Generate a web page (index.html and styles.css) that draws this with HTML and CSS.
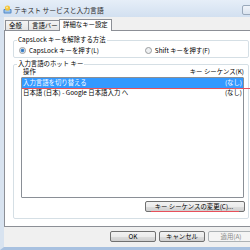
FILE: index.html
```html
<!DOCTYPE html>
<html lang="ja">
<head>
  <meta charset="UTF-8" />
  <title>テキスト サービスと入力言語</title>
  <link rel="stylesheet" href="styles.css">
</head>
<body>
  <div class="window">
    <div class="titlebar">
      <svg class="app-icon" width="9" height="9" viewBox="0 0 9 9">
        <rect x="0.5" y="4" width="8" height="4.5" rx="1" fill="#4f86c6" />
        <rect x="1.5" y="5" width="6" height="2.5" fill="#9cc3ea" />
        <circle cx="4.5" cy="3" r="2.6" fill="#f3c53c" />
        <circle cx="4" cy="2.4" r="1" fill="#fbe8a0" />
      </svg>
      <span class="title">テキスト サービスと入力言語</span>
      <div class="title-btn"></div>
    </div>
    <div class="frame">
      <div class="tabs">
        <div class="tab">全般</div>
        <div class="tab">言語バー</div>
        <div class="tab active">詳細なキー設定</div>
      </div>
      <div class="panel">
        <fieldset class="group caps">
          <legend>CapsLock キーを解除する方法</legend>
          <div class="radio-row">
            <label class="radio-item first"><span class="radio checked"></span>CapsLock キーを押す(L)</label>
            <label class="radio-item second"><span class="radio"></span>Shift キーを押す(F)</label>
          </div>
        </fieldset>
        <fieldset class="group hotkeys">
          <legend>入力言語のホット キー</legend>
          <div class="list-head">
            <span>操作</span>
            <span>キー シーケンス(K)</span>
          </div>
          <div class="listbox">
            <div class="row selected">
              <span>入力言語を切り替える</span><span>(なし)</span>
              <div class="mark-line"></div>
            </div>
            <div class="row">
              <span>日本語 (日本) - Google 日本語入力 へ</span><span>(なし)</span>
            </div>
          </div>
          <div class="change-row">
            <button class="btn change"><span class="mark">キー シーケンスの変更(C)...</span></button>
          </div>
        </fieldset>
      </div>
      <div class="dialog-buttons">
        <button class="btn">OK</button>
        <button class="btn">キャンセル</button>
        <button class="btn disabled">適用(A)</button>
      </div>
    </div>
  </div>
</body>
</html>
```

FILE: styles.css
```css
body {
  margin: 0;
  width: 250px;
  height: 250px;
  overflow: hidden;
  background: #f0f0f0;
  font-family: "Noto Sans CJK JP", sans-serif;
  font-size: 6.4px;
  color: #000;
}
.window {
  display: flex;
  flex-direction: column;
  height: 250px;
}
.titlebar {
  height: 17px;
  flex: none;
  display: flex;
  align-items: center;
  padding: 2px 0 0 3px;
  box-sizing: border-box;
  background: linear-gradient(#e6eef8, #d2e0f0);
}
.app-icon {
  flex: none;
}
.title {
  margin-left: 2px;
  font-size: 6.8px;
  color: #2b2b2b;
}
.title-btn {
  margin-left: auto;
  width: 10px;
  height: 8px;
  margin-right: -4px;
  border: 1px solid #9aa9bb;
  border-radius: 2px;
  background: linear-gradient(#f0f4fa, #dbe4ef);
}
.frame {
  flex: 1;
  display: flex;
  flex-direction: column;
  border-left: 4px solid #d8e3f0;
  border-bottom: 3px solid #a8c1e0;
  overflow: hidden;
}
.tabs {
  display: flex;
  align-items: flex-end;
  height: 13px;
  padding-left: 1px;
  flex: none;
}
.tab {
  height: 9px;
  padding: 0 3px;
  line-height: 9px;
  border: 1px solid #8c8f96;
  border-bottom: none;
  background: linear-gradient(#f4f4f4, #e4e4e4);
  margin-right: -1px;
  white-space: nowrap;
}
.tab:nth-child(1) { width: 16px; }
.tab:nth-child(2) { width: 24px; }
.tab.active {
  height: 11px;
  line-height: 10px;
  width: 45px;
  background: #fff;
  margin-bottom: -1px;
  position: relative;
  z-index: 1;
}
.panel {
  height: 197px;
  box-sizing: border-box;
  border: 1px solid #8c8f96;
  margin-right: -10px;
  background: #fff;
  padding: 5px 0 0 8px;
  flex: none;
}
.group {
  width: 236px;
  box-sizing: border-box;
  margin: 0;
  padding: 0;
  border: 1px solid #d5dfe5;
  border-radius: 2px;
}
.group legend {
  margin-left: 3px;
  padding: 0 1px;
  line-height: 8px;
}
.caps {
  height: 22px;
}
.radio-row {
  display: flex;
  margin-top: 2px;
  height: 8px;
  align-items: center;
}
.radio-item {
  display: flex;
  align-items: center;
  white-space: nowrap;
}
.radio-item.first { margin-left: 5px; }
.radio-item.second { margin-left: 46px; }
.radio {
  width: 5px;
  height: 5px;
  border: 1px solid #9a9c9e;
  border-radius: 50%;
  background: #eef0f2;
  margin-right: 3px;
  flex: none;
}
.radio.checked {
  background: radial-gradient(circle, #2f6fb3 0, #4d92d6 1.6px, #e8edf2 2.2px);
}
.hotkeys {
  margin-top: 2px;
  height: 159px;
}
.list-head {
  display: flex;
  justify-content: space-between;
  height: 8px;
  line-height: 8px;
  margin: 0 4px 0 9px;
}
.listbox {
  position: relative;
  height: 121px;
  box-sizing: border-box;
  margin: 1px 4px 0 7px;
  border: 1px solid #8a8f96;
  border-radius: 1px;
  background: #fff;
  padding-top: 0;
}
.row {
  display: flex;
  justify-content: space-between;
  height: 10px;
  line-height: 10px;
  padding: 0 1px;
  white-space: nowrap;
}
.row.selected {
  position: relative;
  background: #3399ff;
  color: #fff;
}
.mark-line {
  position: absolute;
  left: 0;
  bottom: -1px;
  width: 240px;
  height: 1px;
  background: #e8505b;
}
.listbox {
  overflow: visible;
}
.change-row {
  display: flex;
  justify-content: flex-end;
  margin: 3px 3px 0 0;
}
.btn {
  font: inherit;
  height: 11px;
  line-height: 9px;
  padding: 0;
  border: 1px solid #707070;
  border-radius: 2px;
  background: linear-gradient(#f2f2f2 0, #ebebeb 50%, #dddddd 51%, #cfcfcf 100%);
  color: #000;
}
.btn.change {
  width: 100px;
}
.change .mark {
  display: inline-block;
  padding: 0 6px 0 4px;
  border-bottom: 1px solid #e8505b;
  line-height: 9px;
}
.dialog-buttons {
  display: flex;
  gap: 3px;
  margin: 4px 0 0 106px;
}
.dialog-buttons .btn {
  width: 46px;
  flex: none;
}
.btn.disabled {
  border-color: #adb2b5;
  background: #f4f4f4;
  color: #8a8a8a;
}
```
